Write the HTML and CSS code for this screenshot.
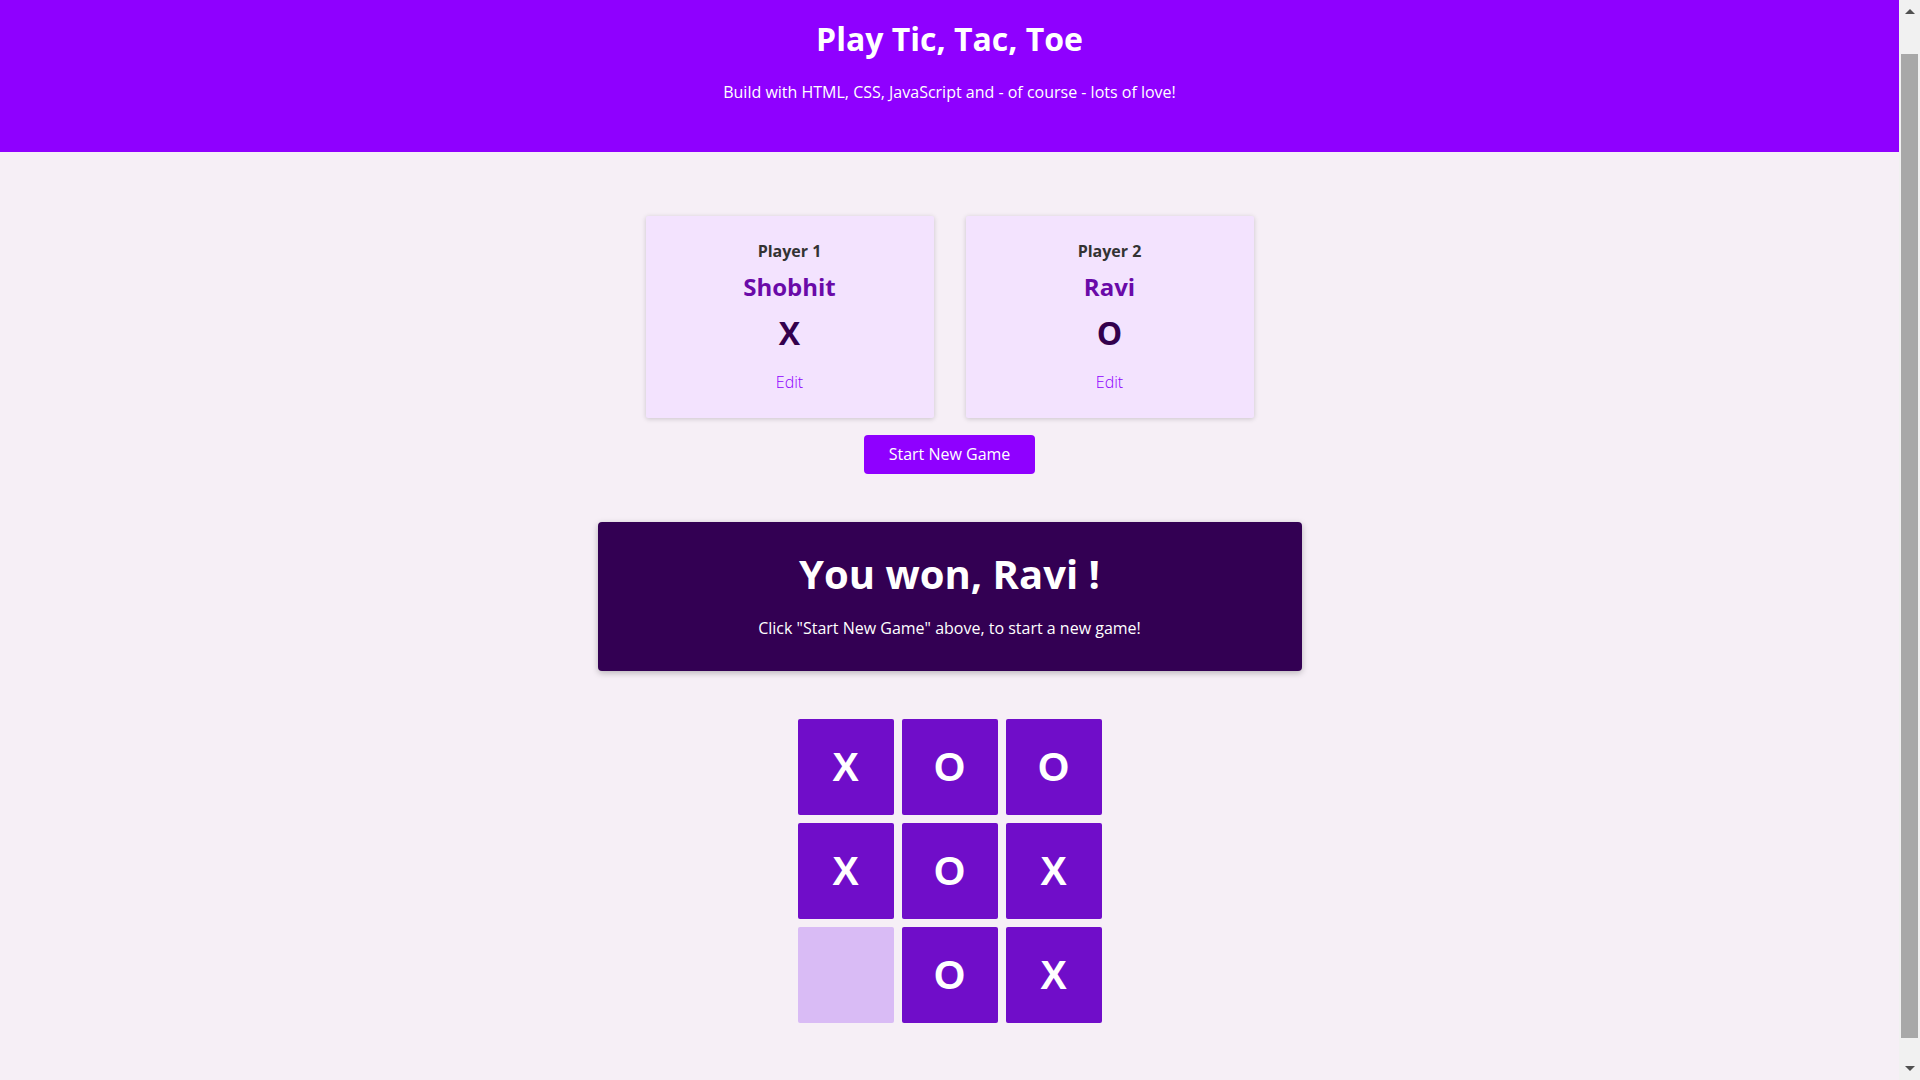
FILE: index.html
```html
<!DOCTYPE html>
<html lang="en">
<head>
<meta charset="utf-8">
<title>Tic Tac Toe</title>
<link rel="stylesheet" href="styles.css">
</head>
<body>
<div class="page">
  <header class="top">
    <h1 class="top-title">Play Tic, Tac, Toe</h1>
    <p class="top-sub">Build with HTML, CSS, JavaScript and - of course - lots of love!</p>
  </header>
  <main class="main">
    <section class="players">
      <article class="player">
        <h2 class="player-label">Player 1</h2>
        <h3 class="player-name">Shobhit</h3>
        <p class="player-symbol">X</p>
        <button class="edit-btn">Edit</button>
      </article>
      <article class="player">
        <h2 class="player-label">Player 2</h2>
        <h3 class="player-name">Ravi</h3>
        <p class="player-symbol">O</p>
        <button class="edit-btn">Edit</button>
      </article>
    </section>
    <div class="actions">
      <button class="start-btn">Start New Game</button>
    </div>
    <section class="result">
      <h2 class="result-title">You won, Ravi !</h2>
      <p class="result-text">Click "Start New Game" above, to start a new game!</p>
    </section>
    <ol class="board">
      <li class="cell">X</li>
      <li class="cell">O</li>
      <li class="cell">O</li>
      <li class="cell">X</li>
      <li class="cell">O</li>
      <li class="cell">X</li>
      <li class="cell cell-empty"></li>
      <li class="cell">O</li>
      <li class="cell">X</li>
    </ol>
  </main>
</div>
<div class="scrollbar" aria-hidden="true">
  <span class="sb-arrow sb-up"></span>
  <span class="sb-thumb"></span>
  <span class="sb-arrow sb-down"></span>
</div>
</body>
</html>
```
FILE: styles.css
```css
* {
  box-sizing: border-box;
}

html {
  background: #f6eff6;
}

body {
  margin: 0;
  font-family: "Open Sans", "Noto Sans", sans-serif;
  background: #f6eff6;
  color: #222;
  overflow: hidden;
}

.page {
  margin-right: 21px;
}

/* fake browser scrollbar drawn over the right edge */
.scrollbar {
  position: fixed;
  top: 0;
  right: 0;
  width: 21px;
  height: 100vh;
  background: #f1f1f1;
  display: flex;
  flex-direction: column;
  align-items: center;
}

.sb-arrow {
  width: 0;
  height: 0;
  border-left: 5px solid transparent;
  border-right: 5px solid transparent;
}

.sb-up {
  margin-top: 9px;
  border-bottom: 5px solid #505050;
}

.sb-down {
  margin-top: auto;
  margin-bottom: 9px;
  border-top: 5px solid #505050;
}

.sb-thumb {
  width: 17px;
  height: 984px;
  margin-top: 40px;
  background: #a8a8a8;
}

.top {
  background: #8f00ff;
  color: #fff;
  text-align: center;
  padding: 15px 0 48px;
  height: 152px;
}

.top-title {
  margin: 0 0 17px;
  font-size: 32px;
  line-height: 48px;
  font-weight: 700;
}

.top-sub {
  margin: 0;
  font-size: 16px;
  line-height: 24px;
}

.main {
  padding: 64px 0 58px;
}

.players {
  display: flex;
  justify-content: center;
  gap: 32px;
}

.player {
  width: 288px;
  height: 202px;
  background: #f3e3fe;
  box-shadow: 0 1px 5px rgba(0, 0, 0, 0.18);
  border-radius: 2px;
  text-align: center;
  padding-top: 23px;
  display: flex;
  flex-direction: column;
  align-items: center;
}

.player-label {
  margin: 0;
  font-size: 16px;
  line-height: 24px;
  font-weight: 700;
  color: #333;
}

.player-name {
  margin: 6px 0 0;
  font-size: 24px;
  line-height: 36px;
  font-weight: 700;
  color: #6a0aa8;
}

.player-symbol {
  margin: 4px 0 0;
  font-size: 32px;
  line-height: 48px;
  font-weight: 700;
  color: #33004d;
}

.edit-btn {
  margin-top: 13px;
  font: inherit;
  font-size: 16px;
  font-weight: 300;
  line-height: 24px;
  color: #8f00ff;
  background: none;
  border: 0;
  padding: 0 4px;
  cursor: pointer;
}

.actions {
  display: flex;
  justify-content: center;
  margin-top: 17px;
}

.start-btn {
  font: inherit;
  font-size: 16px;
  line-height: 23px;
  padding: 8px 24px;
  width: 171px;
  background: #8f00ff;
  color: #fff;
  border: 0;
  border-radius: 4px;
  cursor: pointer;
}

.result {
  width: 704px;
  margin: 48px auto 0;
  background: #330053;
  color: #fff;
  border-radius: 4px;
  box-shadow: 0 2px 6px rgba(0, 0, 0, 0.25);
  text-align: center;
  padding: 22px 0 31px;
}

.result-title {
  margin: 0;
  font-size: 40px;
  line-height: 60px;
  font-weight: 700;
}

.result-text {
  margin: 12px 0 0;
  font-size: 16px;
  line-height: 24px;
}

.board {
  list-style: none;
  margin: 48px auto 0;
  padding: 0;
  display: grid;
  grid-template-columns: repeat(3, 96px);
  grid-auto-rows: 96px;
  gap: 8px;
  justify-content: center;
}

.cell {
  background: #700dc9;
  border-radius: 2px;
  color: #fff;
  font-family: "Liberation Sans", Arial, sans-serif;
  font-weight: 700;
  font-size: 40px;
  display: flex;
  align-items: center;
  justify-content: center;
}

.cell-empty {
  background: #d9bbf5;
}
```
